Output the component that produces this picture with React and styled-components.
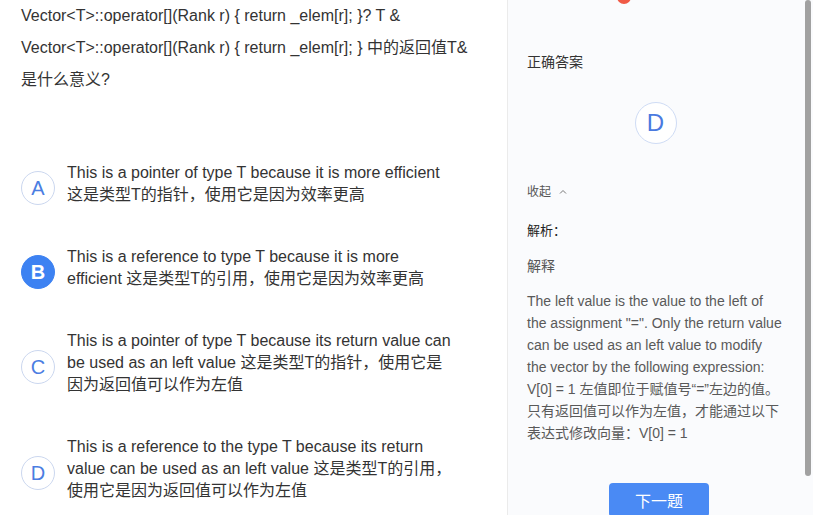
import React from 'react';
import styled, { createGlobalStyle } from 'styled-components';

const GlobalStyle = createGlobalStyle`
  html, body {
    margin: 0;
    padding: 0;
    overflow: hidden;
    background: #fff;
  }
  body {
    font-family: "Liberation Sans", Arial, "Noto Sans CJK SC", sans-serif;
    color: #333;
  }
`;

// page
const Page = styled.div`
  display: flex;
  height: 515px;
  width: 813px;
`;

const QuestionSide = styled.div`
  width: 507px;
  flex-shrink: 0;
  padding: 0 0 0 21px;
  box-sizing: border-box;
`;

const Stem = styled.div`
  width: 455px;
  font-size: 16px;
  line-height: 32px;
  color: #333;
`;

const OptionList = styled.div`
  display: flex;
  flex-direction: column;
  gap: 40px;
  margin-top: 66px;
`;

const Option = styled.div`
  display: flex;
  align-items: center;
  gap: 12px;
`;

const Letter = styled.div`
  width: 34px;
  height: 34px;
  margin-top: 8px;
  flex-shrink: 0;
  border-radius: 50%;
  box-sizing: border-box;
  display: flex;
  align-items: center;
  justify-content: center;
  font-size: 20px;
  border: 1px solid ${(p) => (p.$active ? '#3d82f2' : '#cbd7ef')};
  background: ${(p) => (p.$active ? '#3d82f2' : '#fff')};
  color: ${(p) => (p.$active ? '#fff' : '#4a7de2')};
  font-weight: ${(p) => (p.$active ? 700 : 400)};
`;

const OptionText = styled.div`
  width: 385px;
  font-size: 16px;
  line-height: 22px;
  color: #333;
`;

// answer panel
const AnswerFrame = styled.div`
  position: relative;
  flex: 1;
  height: 515px;
  border-left: 1px solid #ebebeb;
  background: #fafbfd;
`;

const AnswerScroll = styled.div`
  height: 100%;
  overflow-y: auto;
`;

const ScrollThumb = styled.div`
  position: absolute;
  top: 0;
  right: 2px;
  width: 6px;
  height: 476px;
  border-radius: 3px;
  background: #a1a1a1;
`;

const AnswerInner = styled.div`
  position: relative;
  display: flex;
  flex-direction: column;
  padding: 52px 29px 40px 19px;
`;

const Badge = styled.span`
  position: absolute;
  top: -10px;
  left: 109px;
  width: 14px;
  height: 14px;
  border-radius: 50%;
  background: #f05a46;
`;

const PanelTitle = styled.div`
  font-size: 14px;
  line-height: 20px;
  color: #333;
`;

const RightCircle = styled.div`
  align-self: center;
  margin-top: 30px;
  width: 42px;
  height: 42px;
  border-radius: 50%;
  box-sizing: border-box;
  border: 1px solid #cfdcf5;
  background: #fff;
  display: flex;
  align-items: center;
  justify-content: center;
  font-size: 24px;
  color: #4a7ae0;
`;

const Collapse = styled.div`
  display: flex;
  align-items: center;
  gap: 8px;
  margin-top: 39px;
  font-size: 12px;
  line-height: 18px;
  color: #555;
`;

const Label = styled.div`
  margin-top: ${(p) => p.$mt}px;
  font-size: ${(p) => p.$size}px;
  line-height: 20px;
  color: ${(p) => p.$color};
`;

const Explain = styled.div`
  margin-top: 14px;
  font-size: 14px;
  line-height: 22px;
  color: #595959;
`;

const NextButton = styled.button`
  align-self: center;
  margin: 39px 0 0 7px;
  width: 100px;
  height: 34px;
  border: none;
  border-radius: 4px;
  background: #4a8af4;
  color: #fff;
  font-family: inherit;
  font-size: 16px;
  cursor: pointer;
`;

const stem =
  'Vector<T>::operator[](Rank r) { return _elem[r]; }? T & Vector<T>::operator[](Rank r) { return _elem[r]; } 中的返回值T&是什么意义?';

const explanation =
  'The left value is the value to the left of the assignment "=". Only the return value can be used as an left value to modify the vector by the following expression: V[0] = 1 左值即位于赋值号“=”左边的值。只有返回值可以作为左值，才能通过以下表达式修改向量：V[0] = 1';

const options = [
  {
    key: 'A',
    text: 'This is a pointer of type T because it is more efficient 这是类型T的指针，使用它是因为效率更高',
  },
  {
    key: 'B',
    text: 'This is a reference to type T because it is more efficient 这是类型T的引用，使用它是因为效率更高',
    active: true,
  },
  {
    key: 'C',
    text: 'This is a pointer of type T because its return value can be used as an left value 这是类型T的指针，使用它是因为返回值可以作为左值',
  },
  {
    key: 'D',
    text: 'This is a reference to the type T because its return value can be used as an left value 这是类型T的引用，使用它是因为返回值可以作为左值',
  },
];

const ChevronUp = () => (
  <svg width="8" height="6" viewBox="0 0 8 6" fill="none">
    <path d="M1 4.5L4 1.5L7 4.5" stroke="#777" strokeWidth="1" />
  </svg>
);

export default function App() {
  return (
    <>
      <GlobalStyle />
      <Page>
        <QuestionSide>
          <Stem>{stem}</Stem>
          <OptionList>
            {options.map((o) => (
              <Option key={o.key}>
                <Letter $active={o.active}>{o.key}</Letter>
                <OptionText>{o.text}</OptionText>
              </Option>
            ))}
          </OptionList>
        </QuestionSide>

        <AnswerFrame>
          <AnswerScroll>
            <AnswerInner>
              <Badge />
              <PanelTitle>正确答案</PanelTitle>
              <RightCircle>D</RightCircle>
              <Collapse>
                收起 <ChevronUp />
              </Collapse>
              <Label $mt={20} $size={13} $color="#222">解析：</Label>
              <Label $mt={15} $size={14} $color="#555">解释</Label>
              <Explain>{explanation}</Explain>
              <NextButton>下一题</NextButton>
            </AnswerInner>
          </AnswerScroll>
          <ScrollThumb />
        </AnswerFrame>
      </Page>
    </>
  );
}
